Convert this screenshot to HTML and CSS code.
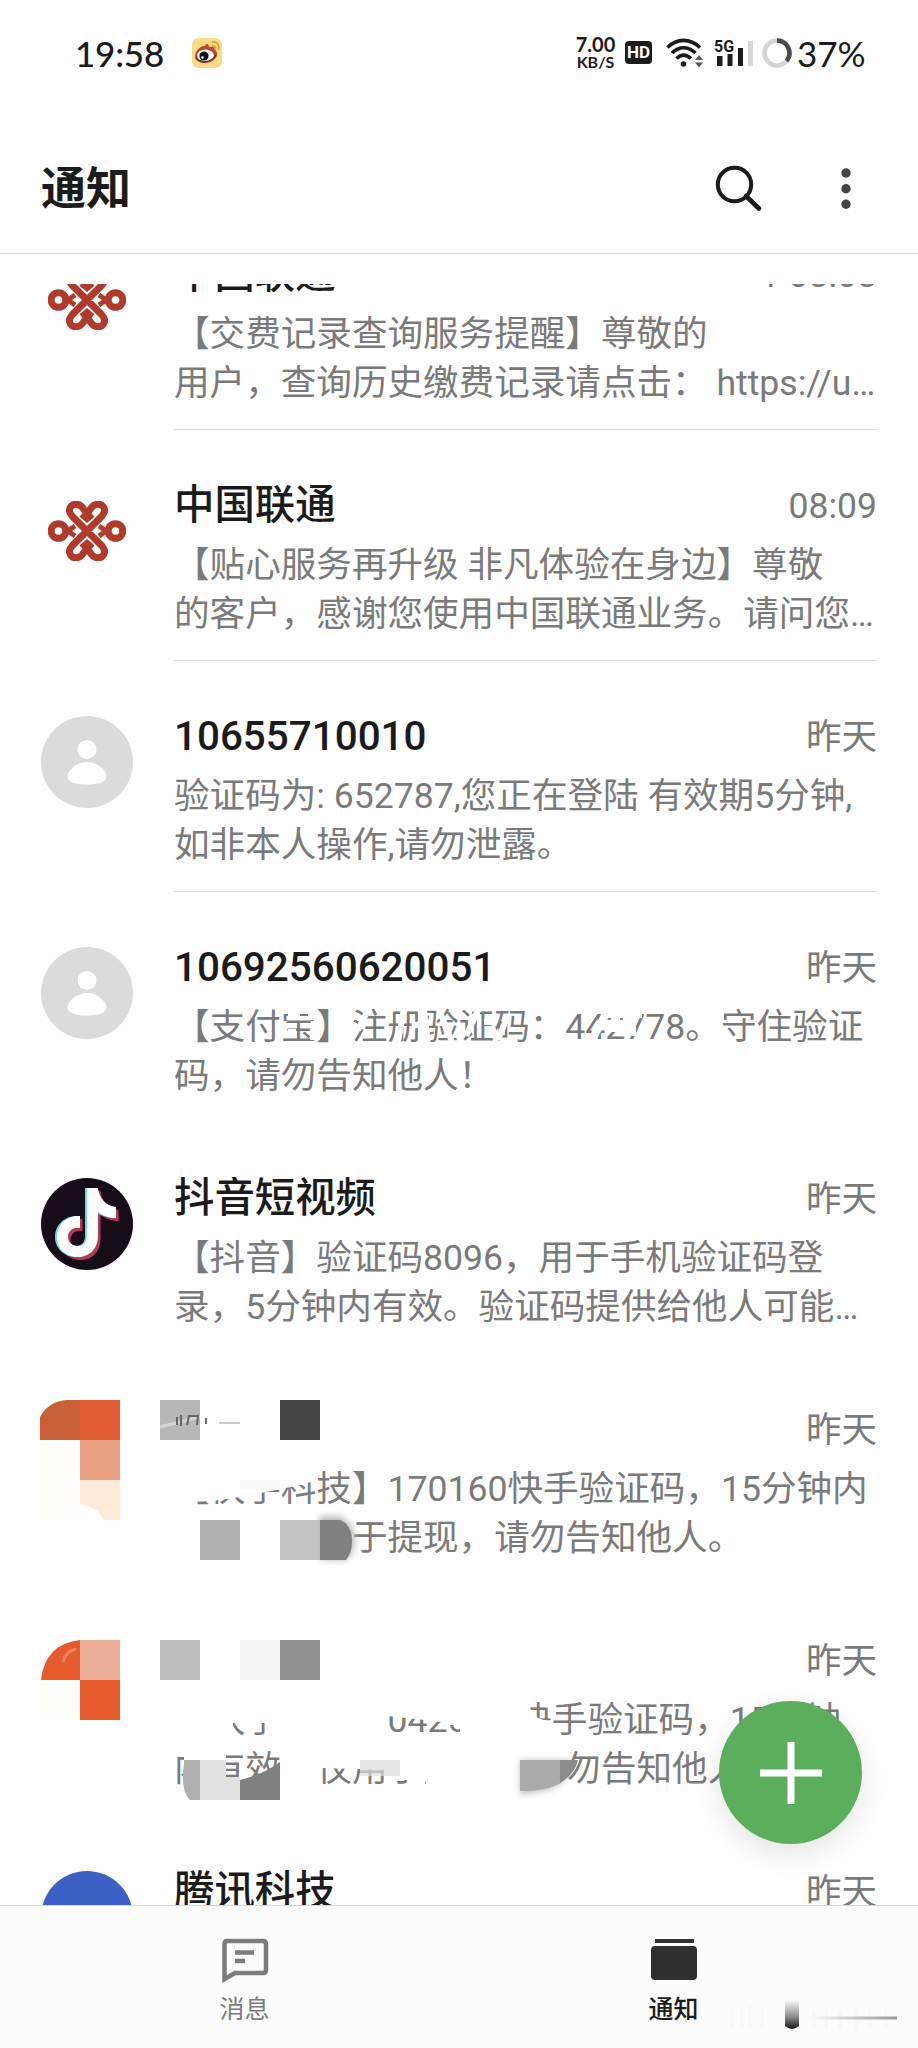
FILE: index.html
```html
<!DOCTYPE html>
<html lang="zh-Hans">
<head>
<meta charset="UTF-8">
<meta name="viewport" content="width=device-width, initial-scale=1.0">
<title>通知</title>
<link rel="stylesheet" href="styles.css">
</head>

<body>

<!-- shared shapes -->
<svg class="defs" width="0" height="0">
  <defs>
    <symbol id="unicom" viewBox="0 0 78 60">
      <g fill="none" stroke="#b23a2b" stroke-width="7">
        <path d="M39 30 L24 15 C18 8 24 2 30 3.5 C35 4.5 36 10 39 13 C42 10 43 4.5 48 3.5 C54 2 60 8 54 15 L24 45 C18 52 24 58 30 56.500 C35 55.500 36 50 39 47 C42 50 43 55.500 48 56.500 C54 58 60 52 54 45 Z"/>
        <circle cx="10.500" cy="30" r="7.300"/>
        <circle cx="67.500" cy="30" r="7.300"/>
        <path d="M17 28 L27 35 M17 32 L27 25 M61 28 L51 35 M61 32 L51 25" stroke-width="5"/>
        <path d="M33 14 L39 19 L45 14 M33 46 L39 41 L45 46" stroke-width="4.500"/>
      </g>
    </symbol>
    <symbol id="person" viewBox="0 0 92 92">
      <circle cx="46" cy="46" r="46" fill="#dbdbdb"/>
      <circle cx="46" cy="33.500" r="9.500" fill="#fff"/>
      <path d="M46 46 C56 46 65.500 54 65.500 61 C65.500 66 57 68.500 46 68.500 C35 68.500 26.500 66 26.500 61 C26.500 54 36 46 46 46 Z" fill="#fff"/>
    </symbol>
    <path id="note" d="M46 10 H57 C58 20 65 28 75 29 V40 C68 40 62 37.500 57 34 V58 C57 71 48 79 37 79 C25 79 16 70 16 59 C16 46 27 37 39 38 V50 C32 48.500 27 53 27 59 C27 64 31 68 37 68 C43 68 46 64 46 58 Z"/>
    <filter id="soft"><feGaussianBlur stdDeviation="3"/></filter>
  </defs>
</svg>

<div class="status-bar">
  <span class="clock">19:58</span>
  <svg class="weibo" width="32" height="32" viewBox="0 0 32 32">
    <rect x="1" y="1" width="30" height="30" rx="7" fill="#f8dc83"/>
    <path d="M4 19 C4 14 10 8 14 9 C16 5 18 8 18 10 C23 9 24 11 24 13 C29 16 25 25 15 26 C8 26.500 4 23 4 19 Z" fill="#c0452f"/>
    <ellipse cx="14.500" cy="18.500" rx="8.500" ry="6" fill="#fff"/>
    <path d="M5 20 C7 26 20 27 25 18" fill="none" stroke="#5f3a25" stroke-width="1.500"/>
    <circle cx="13" cy="19" r="4.600" fill="#101216"/>
    <circle cx="11.500" cy="20.500" r="1.300" fill="#fff"/>
    <path d="M21 5 C26 4 29 8 27.500 13 M21 9 C23.500 8.500 25 10 24 12.500" fill="none" stroke="#dba53c" stroke-width="1.800"/>
  </svg>
  <div class="speed"><b>7.00</b><span>KB/S</span></div>
  <span class="hd">HD</span>
  <svg class="wifi" width="38" height="30" viewBox="0 0 38 30">
    <g fill="none" stroke="#1b1b1b" stroke-width="3.600">
      <path d="M1.500 9.500 C11 0 24 0 34 9.500"/>
      <path d="M6 15 C13 8 22 8 29.500 15"/>
      <path d="M10.500 20.500 C15 16 20 16 25 20.500"/>
    </g>
    <circle cx="17.500" cy="26" r="2.800" fill="#1b1b1b"/>
    <path d="M33 17 L37 22 H29 Z M33 29.500 L29 24.500 H37 Z" fill="#555"/>
  </svg>
  <svg class="signal" width="40" height="30" viewBox="0 0 40 30">
    <text x="0" y="13.500" class="g5">5G</text>
    <path d="M3 18 H8.500 V28 H3 Z M13.500 16 H18.500 V28 H13.500 Z M24 10 H29 V28 H24 Z" fill="#1b1b1b"/>
    <path d="M34 3 H39 V28 H34 Z" fill="#d8d8d8"/>
  </svg>
  <svg class="ring" width="30" height="30" viewBox="0 0 30 30">
    <circle cx="15" cy="15" r="12.500" fill="none" stroke="#d4d4d4" stroke-width="4.500"/>
    <path d="M15 2.500 A12.500 12.500 0 0 1 24.500 23" fill="none" stroke="#4a4a4a" stroke-width="4.500"/>
  </svg>
  <span class="battery">37%</span>
</div>

<div class="title-bar">
  <h1>通知</h1>
  <svg class="search" width="48" height="48" viewBox="0 0 48 48">
    <circle cx="19.500" cy="19.500" r="16.700" fill="none" stroke="#1b1b1b" stroke-width="4"/>
    <path d="M31 31 L44 43.500" stroke="#1b1b1b" stroke-width="4.600" stroke-linecap="round"/>
  </svg>
  <svg class="more" width="10" height="42" viewBox="0 0 10 42">
    <circle cx="5" cy="5" r="4.700"/><circle cx="5" cy="20.700" r="4.700"/><circle cx="5" cy="36.300" r="4.700"/>
  </svg>
</div>

<div class="list">
  <div class="item line first">
    <div class="avatar"><svg width="78" height="60"><use href="#unicom"/></svg></div>
    <div class="content">
      <div class="head"><span class="name">中国联通</span><span class="time">1 08:08</span></div>
      <p>【交费记录查询服务提醒】尊敬的<br>用户，查询历史缴费记录请点击： https://u…</p>
    </div>
  </div>

  <div class="item line">
    <div class="avatar"><svg width="78" height="60"><use href="#unicom"/></svg></div>
    <div class="content">
      <div class="head"><span class="name">中国联通</span><span class="time">08:09</span></div>
      <p>【贴心服务再升级 非凡体验在身边】尊敬<br>的客户，感谢您使用中国联通业务。请问您…</p>
    </div>
  </div>

  <div class="item line">
    <div class="avatar"><svg width="92" height="92"><use href="#person"/></svg></div>
    <div class="content">
      <div class="head"><span class="name">10655710010</span><span class="time">昨天</span></div>
      <p>验证码为: 652787,您正在登陆 有效期5分钟,<br>如非本人操作,请勿泄露。</p>
    </div>
  </div>

  <div class="item">
    <div class="avatar"><svg width="92" height="92"><use href="#person"/></svg></div>
    <div class="content">
      <div class="head"><span class="name">10692560620051</span><span class="time">昨天</span></div>
      <p>【支付宝】注册验证码：442778。守住验证<br>码，请勿告知他人！</p>
    </div>
    <!-- eraser strokes -->
    <svg class="cover" viewBox="0 891 918 231">
      <g fill="none" stroke="#fefefe" stroke-width="6">
        <path d="M284 1010 H318 M288 1016 H300 M308 1016 H318 M288 1033 H296 M310 1036 H320" stroke-width="8"/>
        <path d="M368 1010 L358 1030 M404 1008 L398 1042 M412 1026 L430 1022 M424 1010 L428 1044 M440 1012 L452 1042"/>
        <path d="M466 1036 L480 1006 M484 1022 H494 M498 1040 L506 1020"/>
        <path d="M594 1036 L608 1010 M606 1014 H642 M606 1024 H636 M616 1014 V1032 M632 1014 V1036" stroke-width="8"/>
      </g>
    </svg>
  </div>

  <div class="item">
    <div class="avatar">
      <svg width="92" height="92" viewBox="0 0 92 92">
        <circle cx="46" cy="46" r="46" fill="#170d18"/>
        <use href="#note" x="2.500" y="3" fill="#b8385a"/>
        <use href="#note" x="-2" y="0" fill="#6fdcdc"/>
        <use href="#note" fill="#fff"/>
      </svg>
    </div>
    <div class="content">
      <div class="head"><span class="name">抖音短视频</span><span class="time">昨天</span></div>
      <p>【抖音】验证码8096，用于手机验证码登<br>录，5分钟内有效。验证码提供给他人可能…</p>
    </div>
  </div>

  <div class="item">
    <div class="avatar"></div>
    <div class="content">
      <div class="head"><span class="name"></span><span class="time">昨天</span></div>
      <p>【快手科技】170160快手验证码，15分钟内<br>有效，仅用于提现，请勿告知他人。</p>
    </div>
    <svg class="cover" viewBox="0 1353 918 231">
      <path d="M170 1460 H322 V1476 L306 1484 L276 1490 L240 1497 L212 1501 L192 1502 V1520 H354 V1572 H170 Z" fill="#fefefe"/>
      <path d="M40 1440 V1417 Q48 1402 66 1400 H80 V1440 Z" fill="#cb5f38"/>
      <path d="M80 1400 H120 V1440 H80 Z" fill="#de5a30"/>
      <path d="M80 1440 H120 V1480 H80 Z" fill="#e9a184"/>
      <path d="M40 1440 H80 V1520 H40 Z" fill="#fffdfa"/>
      <path d="M80 1480 H120 V1520 H104 Q96 1505 80 1505 Z" fill="#fdebd8"/>
      <path d="M160 1400 H200 V1440 H160 Z" fill="#b7b7b7"/>
      <path d="M160 1427 Q180 1422 200 1417" fill="none" stroke="#d5d5d5" stroke-width="3"/>
      <path d="M177 1425 V1417 M181 1426 V1415 M187 1425 L189 1416 H198 L197 1425 M206 1418 V1424" fill="none" stroke="#666" stroke-width="2"/>
      <path d="M219 1423 H240" stroke="#ccc" stroke-width="2"/>
      <path d="M280 1400 H320 V1440 H280 Z" fill="#444"/>
      <path d="M240 1480 H280 V1490 H240 Z" fill="#f9f9f9"/>
      <path d="M200 1520 H240 V1560 H200 Z" fill="#b0b0b0"/>
      <path d="M280 1520 H320 V1560 H280 Z" fill="#c3c3c3"/>
      <path d="M320 1516 H338 Q355 1522 355 1540 Q354 1553 347 1560 H320 Z" fill="#bdbdbd" filter="url(#soft)"/>
      <path d="M320 1520 H340 Q352 1525 352 1541 Q352 1553 346 1560 H320 Z" fill="#808080"/>
    </svg>
  </div>

  <div class="item">
    <div class="avatar"></div>
    <div class="content">
      <div class="head"><span class="name"></span><span class="time">昨天</span></div>
      <p>【快手科技】042538 快手验证码，15分钟<br>内有效，仅用于提现，请勿告知他人。</p>
    </div>
    <svg class="cover" viewBox="0 1584 918 231">
      <path d="M170 1694 H524 L532 1712 Q538 1722 552 1720 V1745 H576 L572 1752 L568 1768 Q560 1796 520 1796 H426 V1780 H396 V1770 L322 1768 V1796 H280 V1742 H266 V1723 H233 V1738 H226 V1784 H184 V1756 H172 Z M388 1716 L460 1724 V1732 H388 Z" fill="#fefefe" fill-rule="evenodd"/>
      <path d="M41 1680 Q45 1644 80 1640 V1680 Z" fill="#e65a2c"/>
      <path d="M63 1662 Q65 1652 76 1649" fill="none" stroke="#e98560" stroke-width="3"/>
      <path d="M80 1640 H120 V1680 H80 Z" fill="#e9ac97"/>
      <path d="M40 1680 H80 V1720 H40 Z" fill="#fffdfa"/>
      <path d="M80 1680 H120 V1720 H80 Z" fill="#e65a2c"/>
      <path d="M160 1640 H200 V1680 H160 Z" fill="#bdbdbd"/>
      <path d="M240 1640 H280 V1680 H240 Z" fill="#f3f3f3"/>
      <path d="M280 1640 H320 V1680 H280 Z" fill="#919191"/>
      <path d="M184 1764 Q180 1790 190 1800 H200 V1760 H184 Z" fill="#b0b0b0"/>
      <path d="M200 1760 H226 V1777 H240 V1800 H200 Z" fill="#e1e1e1"/>
      <path d="M240 1780 Q264 1774 280 1762 V1800 H240 Z" fill="#808080"/>
      <path d="M360 1760 H400 V1776 H360 Z" fill="#ddd" fill-opacity=".7"/>
      <path d="M520 1760 H572 Q572 1774 560 1784 Q548 1793 520 1794 Z" fill="#c4c4c4" filter="url(#soft)"/>
      <path d="M520 1760 H560 V1783 Q548 1791 520 1791 Z" fill="#aaa"/>
      <path d="M560 1760 H578 Q575 1774 560 1783 Z" fill="#8c8c8c"/>
    </svg>
  </div>

  <div class="item">
    <div class="avatar"><span class="dot"></span></div>
    <div class="content">
      <div class="head"><span class="name">腾讯科技</span><span class="time">昨天</span></div>
    </div>
  </div>

  <button class="fab" aria-label="新建">
    <svg width="62" height="62" viewBox="0 0 62 62"><path d="M31 0 V62 M0 31 H62" stroke="#fff" stroke-width="7"/></svg>
  </button>
</div>

<div class="tabs">
  <div class="tab">
    <svg width="48" height="46" viewBox="0 0 48 46">
      <path d="M3.500 42 V7 Q3.500 4 6.500 4 H42 Q45 4 45 7 V33 Q45 36 42 36 H14 Z" fill="none" stroke="#7c7c7c" stroke-width="4.500"/>
      <path d="M14 15.500 H33 M14 24 H24" stroke="#7c7c7c" stroke-width="4.500"/>
    </svg>
    <span>消息</span>
  </div>
  <div class="tab active">
    <svg width="48" height="46" viewBox="0 0 48 46">
      <path d="M5 2 H44 V6 H5 Z" fill="#303030"/>
      <rect x="1" y="9" width="46" height="34" rx="4" fill="#303030"/>
    </svg>
    <span>通知</span>
  </div>
  <svg class="smear" width="180" height="36" viewBox="0 0 180 36">
    <defs>
      <linearGradient id="v" x1="0" y1="0" x2="0" y2="1">
        <stop offset="0" stop-color="#fcfcfc"/><stop offset=".6" stop-color="#888"/><stop offset="1" stop-color="#111"/>
      </linearGradient>
      <linearGradient id="h"><stop offset="0" stop-color="#fcfcfc"/><stop offset="1" stop-color="#999"/></linearGradient>
    </defs>
    <path d="M4 10 V30 M14 10 V30 M22 8 V30 M34 10 V30 M86 12 V30 M98 10 V32 M112 14 V30 M128 12 V32 M142 10 V30 M158 10 V30" stroke="#f7f7f7" stroke-width="3"/>
    <path d="M57 2 H71 V28 Q64 34 57 28 Z" fill="url(#v)"/>
    <path d="M80 18.500 H169 V21.500 H80 Z" fill="url(#h)"/>
  </svg>
</div>

</body>
</html>
```

FILE: styles.css
```css
* {
  box-sizing: border-box;
}

body {
  margin: 0;
  height: 2048px;
  display: flex;
  flex-direction: column;
  overflow: hidden;
  background: #fefefe;
  color: #1b1b1b;
  font-family: Roboto, "Noto Sans CJK SC", sans-serif;
  text-spacing-trim: space-all;
}

svg {
  display: block;
  flex: none;
}

.defs {
  position: absolute;
}

/* status bar */

.status-bar {
  height: 126px;
  padding: 0 53px 21px 75px;
  display: flex;
  align-items: center;
  flex: none;
}

.clock {
  width: 116px;
  font: 500 35px/40px Lato, sans-serif;
  letter-spacing: -0.2px;
}

.speed {
  margin-left: auto;
  width: 41px;
  display: flex;
  flex-direction: column;
  align-items: center;
  font: 700 16px/17px Lato, sans-serif;
}

.speed b {
  font: 700 20px/18px Lato, sans-serif;
}

.hd {
  width: 27px;
  height: 23px;
  margin-left: 9px;
  border-radius: 4px;
  background: #1b1b1b;
  color: #fff;
  font: 700 17px/23px Roboto, sans-serif;
  text-align: center;
}

.wifi {
  margin-left: 14px;
}

.signal {
  margin-left: 10px;
}

.g5 {
  font: 700 16px Roboto, sans-serif;
  fill: #1b1b1b;
}

.ring {
  margin-left: 8px;
}

.battery {
  margin-left: 5px;
  width: 68px;
  font: 400 35px/40px Lato, sans-serif;
  white-space: nowrap;
}

/* title bar */

.title-bar {
  height: 128px;
  padding: 0 67px 2px 41px;
  display: flex;
  align-items: center;
  flex: none;
  border-bottom: 1px solid #dfdfdf;
}

h1 {
  margin: 0;
  padding-top: 2px;
  font-size: 45px;
  line-height: 60px;
  font-weight: 700;
}

.search {
  margin-left: auto;
}

.more {
  margin-left: 78px;
  fill: #444;
}

/* list */

.list {
  position: relative;
  height: 1621px;
  margin-top: 30px;
  overflow: hidden;
  flex: none;
}

.item {
  position: relative;
  height: 231px;
  padding: 0 41px 0 40px;
  display: flex;
}

.first {
  margin-top: -85px;
}

.avatar {
  width: 93px;
  height: 92px;
  margin: 55px 41px 0 0;
  display: flex;
  align-items: center;
  justify-content: center;
  flex: none;
}

.dot {
  width: 92px;
  height: 92px;
  border-radius: 50%;
  background: #3c60c6;
}

.content {
  flex: 1;
  padding-top: 46px;
  border-bottom: 1px solid transparent;
  white-space: nowrap;
}

.line .content {
  border-color: #dfdfdf;
}

.head {
  height: 65px;
  display: flex;
  justify-content: space-between;
  line-height: 60px;
}

.name {
  font-size: 40.4px;
  font-weight: 500;
}

.time {
  font-size: 35.5px;
  color: #7a7a7a;
}

.content p {
  margin: 0;
  font-size: 35.6px;
  line-height: 48.5px;
  color: #7a7a7a;
}

.cover {
  position: absolute;
  left: 0;
  top: -1px;
  width: 918px;
  height: 231px;
}

.fab {
  position: absolute;
  right: 56px;
  bottom: 61px;
  width: 143px;
  height: 143px;
  padding: 0;
  border: none;
  border-radius: 50%;
  background: #5bae5b;
  box-shadow: 0 10px 28px rgba(0, 0, 0, 0.1);
  display: flex;
  align-items: center;
  justify-content: center;
}

/* bottom tabs */

.tabs {
  position: relative;
  flex: 1;
  padding-left: 30px;
  display: flex;
  border-top: 1px solid #d8d8d8;
  background: #fcfcfc;
}

.tab {
  width: 429px;
  padding-top: 31px;
  display: flex;
  flex-direction: column;
  align-items: center;
  font-size: 25px;
  line-height: 36px;
  color: #7c7c7c;
}

.tab span {
  margin-top: 9px;
}

.active {
  color: #1b1b1b;
  font-weight: 500;
}

.smear {
  position: absolute;
  left: 728px;
  top: 92px;
}
```
